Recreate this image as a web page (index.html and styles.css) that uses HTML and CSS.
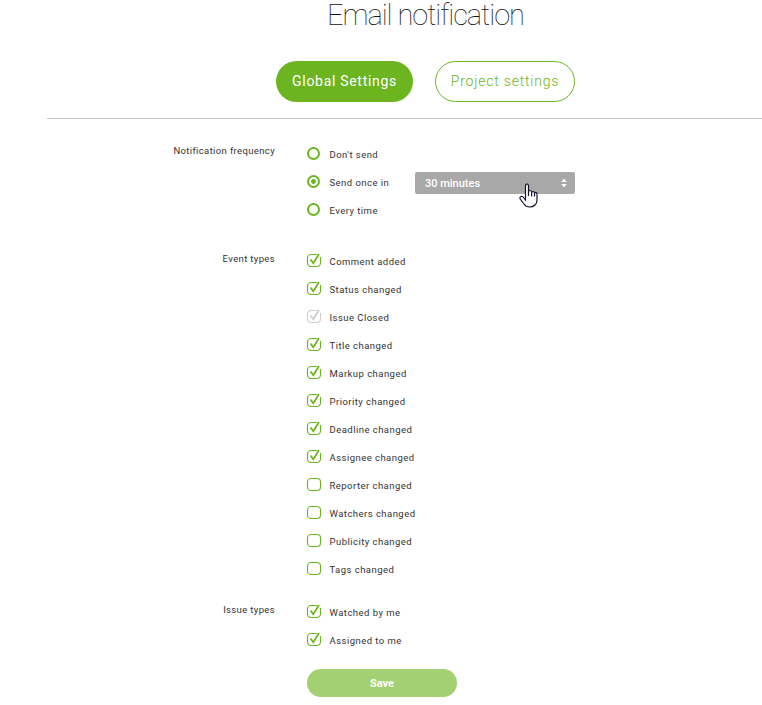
FILE: index.html
```
<!DOCTYPE html>
<html lang="en">
<head>
<meta charset="utf-8">
<title>Email notification</title>
<link rel="stylesheet" href="styles.css">
</head>
<body>
<svg class="sprite" aria-hidden="true">
  <symbol id="box" viewBox="0 0 16 16"><rect x="1.500" y="2.500" width="13" height="12" rx="3.500" fill="none" stroke="currentColor" stroke-width="1.100"/></symbol>
  <symbol id="checked" viewBox="0 0 16 16"><path d="M11 2.500H5A3.500 3.500 0 0 0 1.500 6v5A3.500 3.500 0 0 0 5 14.500h6a3.500 3.500 0 0 0 3.500-3.500V5" fill="none" stroke="currentColor" stroke-width="1.100"/><path d="M4.500 7.500 7.300 11.200 13 2" fill="none" stroke="currentColor" stroke-width="1.800"/></symbol>
</svg>
<main class="page">
  <h1 class="title">Email notification</h1>
  <nav class="tabs">
    <a class="tab tab-active">Global Settings</a>
    <a class="tab tab-outline">Project settings</a>
  </nav>
  <form class="settings">
    <section class="group">
      <div class="label">Notification frequency</div>
      <div class="options">
        <div class="option"><span class="radio"></span><span>Don't send</span></div>
        <div class="option"><span class="radio radio-on"></span><span class="once">Send once in</span>
          <div class="select"><span>30 minutes</span><svg class="arrows" viewBox="0 0 6 10"><path d="M0.300 4 3 0.500 5.700 4ZM0.300 6 3 9.500 5.700 6Z" fill="#fff"/></svg>
            <svg class="pointer" viewBox="0 0 19 25"><path d="M6.500 15V3.200Q6.500 1 8 1T9.500 3.200V9.500Q9.500 7.500 11 7.500T12.600 9.500V10Q12.600 8.500 14 8.500T15.500 10V10.700Q15.500 9.300 16.700 9.300T18 11V17Q18 20 16 22Q14 24 10.500 24Q7 24 5 21L1.200 16Q.4 14 2.100 13.500Q3.800 13.200 5 15L6.500 17Z" fill="#fff" stroke="#17142c" stroke-width="1.200"/><path d="M9.500 9v4M12.600 9.500v4M15.500 10v3.500" stroke="#17142c" stroke-width="1.200"/></svg>
          </div>
        </div>
        <div class="option"><span class="radio"></span><span>Every time</span></div>
      </div>
    </section>
    <section class="group events">
      <div class="label">Event types</div>
      <div class="options">
        <div class="option"><svg class="check"><use href="#checked"/></svg><span>Comment added</span></div>
        <div class="option"><svg class="check"><use href="#checked"/></svg><span>Status changed</span></div>
        <div class="option"><svg class="check disabled"><use href="#checked"/></svg><span>Issue Closed</span></div>
        <div class="option"><svg class="check"><use href="#checked"/></svg><span>Title changed</span></div>
        <div class="option"><svg class="check"><use href="#checked"/></svg><span>Markup changed</span></div>
        <div class="option"><svg class="check"><use href="#checked"/></svg><span>Priority changed</span></div>
        <div class="option"><svg class="check"><use href="#checked"/></svg><span>Deadline changed</span></div>
        <div class="option"><svg class="check"><use href="#checked"/></svg><span>Assignee changed</span></div>
        <div class="option"><svg class="check"><use href="#box"/></svg><span>Reporter changed</span></div>
        <div class="option"><svg class="check"><use href="#box"/></svg><span>Watchers changed</span></div>
        <div class="option"><svg class="check"><use href="#box"/></svg><span>Publicity changed</span></div>
        <div class="option"><svg class="check"><use href="#box"/></svg><span>Tags changed</span></div>
      </div>
    </section>
    <section class="group issues">
      <div class="label">Issue types</div>
      <div class="options">
        <div class="option"><svg class="check"><use href="#checked"/></svg><span>Watched by me</span></div>
        <div class="option"><svg class="check"><use href="#checked"/></svg><span>Assigned to me</span></div>
      </div>
    </section>
    <button class="save" type="button">Save</button>
  </form>
</main>
</body>
</html>
```
FILE: styles.css
```
* { box-sizing: border-box; }
body { margin: 0; background: #fff; color: #333; font: 9.5px/14px Roboto, sans-serif; overflow: hidden; }
.sprite { display: none; }
.page { height: 705px; margin-left: 47px; }
.title { margin: 0; padding-left: 280px; height: 61px; font-size: 29px; line-height: 30px; font-weight: 100; letter-spacing: -1.05px; color: #111; white-space: nowrap; }
.tabs { display: flex; gap: 22px; height: 58px; padding-left: 229px; border-bottom: 1px solid #c4c4c4; }
.tab { height: 41px; padding-bottom: 2px; border-radius: 21px; display: flex; align-items: center; justify-content: center; font-size: 14px; white-space: nowrap; }
.tab-active { width: 137px; background: #6cb521; color: #fff; letter-spacing: .7px; }
.tab-outline { width: 140px; border: 1px solid #6cb521; color: #6cb521; font-weight: 300; letter-spacing: .8px; }
.settings { padding-top: 22px; }
.group { display: grid; grid-template-columns: 228px 1fr; column-gap: 32px; letter-spacing: .46px; }
.label { text-align: right; padding-top: 3px; letter-spacing: .36px; }
.events { margin-top: 23px; }
.events .label, .issues .label { padding-top: 4px; }
.issues { margin-top: 15px; }
.option { display: flex; align-items: center; height: 28px; white-space: nowrap; }
.radio { width: 13px; height: 13px; border: 2px solid #6cb521; border-radius: 50%; margin: 0 9.500px 3px 0; }
.radio-on { background: radial-gradient(circle, #6cb521 2px, #fff 2.800px); }
.once { width: 85.500px; }
.check { width: 16px; height: 16px; margin: 0 7.500px 4px -1px; color: #6cb521; }
.disabled { color: #ccc; }
.select { position: relative; display: flex; align-items: center; justify-content: space-between; width: 160px; height: 22px; padding: 0 8px 0 10px; border-radius: 2px; background: #a8a8a8; color: #fff; font-size: 11px; line-height: 14px; font-weight: 500; letter-spacing: 0; }
.select span { padding-top: 1px; }
.arrows { width: 6px; height: 10px; }
.pointer { position: absolute; left: 104px; top: 11px; width: 19px; height: 25px; }
.save { display: block; margin: 14px 0 0 260px; width: 150px; height: 28px; padding: 1px 0 0; border: 0; border-radius: 14px; background: #a2d072; color: #fff; font: 700 11px/28px Roboto, sans-serif; }
```
